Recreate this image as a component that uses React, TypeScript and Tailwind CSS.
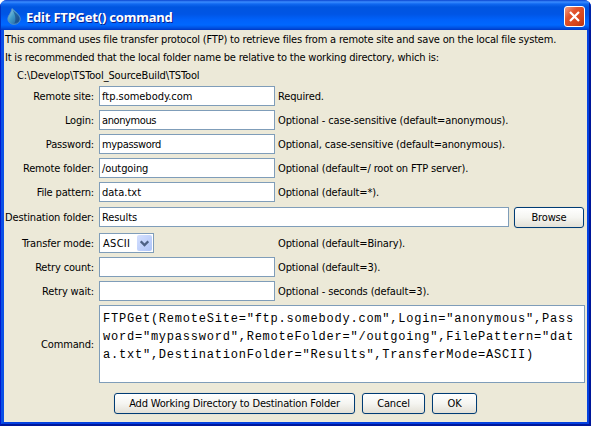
import React from "react";

type FieldRow = { label: string; value: string; note: string; tracking: string };

const topRows: FieldRow[] = [
  { label: "Remote site:", value: "ftp.somebody.com", note: "Required.", tracking: "tracking-[-0.02px]" },
  { label: "Login:", value: "anonymous", note: "Optional - case-sensitive (default=anonymous).", tracking: "tracking-[-0.4px]" },
  { label: "Password:", value: "mypassword", note: "Optional, case-sensitive (default=anonymous).", tracking: "tracking-[-0.35px]" },
  { label: "Remote folder:", value: "/outgoing", note: "Optional (default=/ root on FTP server).", tracking: "tracking-[-0.1px]" },
  { label: "File pattern:", value: "data.txt", note: "Optional (default=*).", tracking: "tracking-normal" },
];

const retryRows: FieldRow[] = [
  { label: "Retry count:", value: "", note: "Optional (default=3).", tracking: "tracking-normal" },
  { label: "Retry wait:", value: "", note: "Optional - seconds (default=3).", tracking: "tracking-normal" },
];

function Label({ children }: { children: React.ReactNode }) {
  return (
    <div className="flex w-[90px] shrink-0 justify-end pt-[2px] text-right tracking-[-0.15px] whitespace-nowrap">
      {children}
    </div>
  );
}

function Note({ className, children }: { className: string; children: React.ReactNode }) {
  return <div className={"pt-[2px] tracking-[-0.14px] whitespace-nowrap " + className}>{children}</div>;
}

function Box({ className, children }: { className: string; children?: React.ReactNode }) {
  return (
    <div className={"ml-[5px] h-5 shrink-0 border border-[#7f9db9] bg-white leading-[20px] whitespace-nowrap " + className}>
      {children}
    </div>
  );
}

function Row({ row }: { row: FieldRow }) {
  return (
    <div className="flex h-5 items-center">
      <Label>{row.label}</Label>
      <Box className="w-[176px] pl-[2px]">
        <span className={row.tracking}>{row.value}</span>
      </Box>
      <Note className="ml-[3px]">{row.note}</Note>
    </div>
  );
}

function Button({ className, children }: { className: string; children: React.ReactNode }) {
  return (
    <button
      className={
        "h-[21px] shrink-0 rounded-[3px] border border-[#003c74] bg-gradient-to-b from-white via-[#f5f5f1] to-[#e3e0d6] text-center leading-[19px] tracking-[-0.17px] whitespace-nowrap shadow-[0_0_0_1px_#e6e3d5] " +
        className
      }
    >
      {children}
    </button>
  );
}

function Drop() {
  return (
    <svg width="14" height="17" viewBox="0 0 14 17" className="mt-[2px] ml-[7px]">
      <defs>
        <linearGradient id="drop" x1="0" y1="0" x2="1" y2="1">
          <stop offset="0" stopColor="#a5d3e6" />
          <stop offset="0.45" stopColor="#3f9ac8" />
          <stop offset="1" stopColor="#17509a" />
        </linearGradient>
      </defs>
      <path d="M5 0.5 C7.500 3 13.300 6.800 13.300 11 A6.200 5.400 0 0 1 0.800 11 C0.800 7.500 4.300 5 5 0.500Z" fill="url(#drop)" stroke="#5b93c4" strokeWidth="0.800" />
      <path d="M5.500 2 C8.500 5 12.500 7.500 12.500 11 C12 13.500 10 15 7.500 15.300 C9.500 11 8 6 5.500 2Z" fill="#143c78" opacity="0.550" />
    </svg>
  );
}

export default function App() {
  return (
    <div className="flex h-[426px] w-[591px] flex-col overflow-hidden bg-white font-['DejaVu_Sans_Condensed','DejaVu_Sans',sans-serif] text-[11px] leading-[18px] text-black">
      <div className="flex h-[426px] flex-col overflow-hidden rounded-t-[7px] bg-[#0a38dc]">
        <header className="flex h-[30px] shrink-0 items-center bg-[linear-gradient(180deg,#0a44d0_0px,#3a8cff_2px,#1068f0_4px,#0055e0_7px,#0055e5_14px,#0062fb_20px,#0068ff_25px,#0050e0_28px,#0038c4_30px)] shadow-[inset_1px_0_0_#0030c0,inset_-2px_0_0_#0024a8]">
          <Drop />
          <h1 className="mt-[3px] ml-[5px] font-['Noto_Sans',sans-serif] text-[13px] font-bold tracking-[-0.2px] whitespace-nowrap text-white [text-shadow:1px_1px_0_#0a1e8c]">
            Edit FTPGet() command
          </h1>
          <button className="mt-[3px] mr-[6px] ml-auto flex size-[21px] items-center justify-center rounded-[3px] border border-white bg-[linear-gradient(135deg,#f0a088_0%,#e2532c_35%,#d8461c_70%,#b83410_100%)]">
            <svg width="13" height="13" viewBox="0 0 13 13">
              <path d="M2 2 L11 11 M11 2 L2 11" stroke="#fff" strokeWidth="2.200" />
            </svg>
          </button>
        </header>
        <div className="h-[396px] shrink-0 border-r-2 border-b-2 border-l border-[#00179a] border-l-[#0019cf]">
          <div className="h-[394px] border-r-2 border-b-2 border-l-3 border-[#0441e0] border-l-[#0a50e6]">
            <main className="flex h-[392px] w-[583px] flex-col bg-[#ece9d8]">
              <div className="h-[18px] pl-px leading-[20px] tracking-[-0.19px] whitespace-nowrap">
                This command uses file transfer protocol (FTP) to retrieve files from a remote site and save on the local file system.
              </div>
              <div className="h-[18px] pl-px leading-[20px] tracking-[-0.2px] whitespace-nowrap">
                It is recommended that the local folder name be relative to the working directory, which is:
              </div>
              <div className="h-[18px] pl-[13px] leading-[20px] tracking-[-0.14px] whitespace-nowrap">
                C:\Develop\TSTool_SourceBuild\TSTool
              </div>

              <section className="mt-[2px] flex flex-col gap-1">
                {topRows.map((r) => (
                  <Row key={r.label} row={r} />
                ))}
              </section>

              <div className="mt-[5px] flex h-5 items-center">
                <Label>Destination folder:</Label>
                <Box className="w-[410px] pl-[2px] tracking-[-0.1px]">Results</Box>
                <Button className="ml-[5px] w-[70px] self-start">Browse</Button>
              </div>

              <div className="mt-[6px] flex h-5 items-center">
                <Label>Transfer mode:</Label>
                <Box className="flex w-[55px] items-center pl-[3px]">
                  <span className="pt-[2px] tracking-[0.3px]">ASCII</span>
                  <span className="mr-px ml-auto flex h-4 w-[15px] items-center justify-center rounded-[2px] bg-gradient-to-br from-[#d5e0fe] to-[#aec4f8]">
                    <svg width="9" height="7" viewBox="0 0 9 7">
                      <path d="M0.700 1.200 L4.500 5 L8.300 1.200" fill="none" stroke="#4d6185" strokeWidth="2.300" />
                    </svg>
                  </span>
                </Box>
                <Note className="ml-[124px]">Optional (default=Binary).</Note>
              </div>

              <section className="mt-1 flex flex-col gap-1">
                {retryRows.map((r) => (
                  <Row key={r.label} row={r} />
                ))}
              </section>

              <div className="mt-1 flex h-[78px] items-center">
                <Label>Command:</Label>
                <div className="ml-[5px] h-[78px] w-[486px] border border-[#7f9db9] bg-white pt-[4px] pl-[3px] font-['Liberation_Mono',monospace] text-[12px] tracking-[0.78px] whitespace-pre">
                  <div>{'FTPGet(RemoteSite="ftp.somebody.com",Login="anonymous",Pass'}</div>
                  <div>{'word="mypassword",RemoteFolder="/outgoing",FilePattern="dat'}</div>
                  <div>{'a.txt",DestinationFolder="Results",TransferMode=ASCII)'}</div>
                </div>
              </div>

              <footer className="mt-[10px] ml-[110px] flex gap-[7px]">
                <Button className="w-[241px]">Add Working Directory to Destination Folder</Button>
                <Button className="w-[63px]">Cancel</Button>
                <Button className="w-[45px]">OK</Button>
              </footer>
            </main>
          </div>
        </div>
      </div>
    </div>
  );
}
